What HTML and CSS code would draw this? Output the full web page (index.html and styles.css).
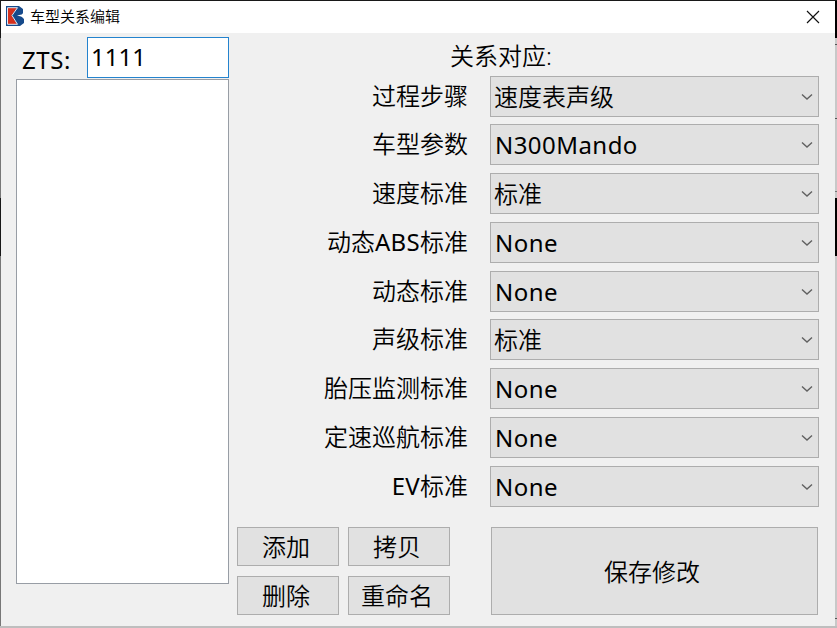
FILE: index.html
```html
<!DOCTYPE html>
<html lang="zh-CN">
<head>
<meta charset="utf-8">
<title>车型关系编辑</title>
<link rel="stylesheet" href="styles.css">
</head>
<body>
<div class="desktop">
<div class="edge"></div>
<main class="window">
  <header class="titlebar">
    <svg class="logo" width="18" height="20" viewBox="0 0 18 20"><path fill="#164a8b" d="M0 0H13L17 3V7L15 10L18 13V17L14 20H0Z"/><path fill="#d5301d" d="M1.7 2H11L5.5 9.5L11 18H1.7Z"/><path fill="none" stroke="#e4e9f2" stroke-width="1" d="M1.5 1.7H11.5L6 9.5L11.5 18.3H1.5Z"/><path fill="#fff" d="M11 9.5L18 8V11L15 10.5Z"/></svg>
    <h1 class="title">车型关系编辑</h1>
    <svg class="close" width="14" height="14" viewBox="0 0 14 14"><path d="M1 1L13 13M13 1L1 13" fill="none" stroke="#111" stroke-width="1.15"/></svg>
  </header>
  <div class="content">
    <section class="left">
      <div class="search"><span>ZTS:</span><div class="input">1111</div></div>
      <div class="list"></div>
    </section>
    <section class="right">
      <h2 class="heading">关系对应:</h2>
      <div class="fields">
        <span class="label">过程步骤</span><div class="combo"><span>速度表声级</span><svg class="arrow" viewBox="0 0 12 8"><path d="M1 1.5L6 6L11 1.5"/></svg></div>
        <span class="label">车型参数</span><div class="combo latin"><span>N300Mando</span><svg class="arrow" viewBox="0 0 12 8"><path d="M1 1.5L6 6L11 1.5"/></svg></div>
        <span class="label">速度标准</span><div class="combo"><span>标准</span><svg class="arrow" viewBox="0 0 12 8"><path d="M1 1.5L6 6L11 1.5"/></svg></div>
        <span class="label">动态<b>ABS</b>标准</span><div class="combo latin"><span>None</span><svg class="arrow" viewBox="0 0 12 8"><path d="M1 1.5L6 6L11 1.5"/></svg></div>
        <span class="label">动态标准</span><div class="combo latin"><span>None</span><svg class="arrow" viewBox="0 0 12 8"><path d="M1 1.5L6 6L11 1.5"/></svg></div>
        <span class="label">声级标准</span><div class="combo"><span>标准</span><svg class="arrow" viewBox="0 0 12 8"><path d="M1 1.5L6 6L11 1.5"/></svg></div>
        <span class="label">胎压监测标准</span><div class="combo latin"><span>None</span><svg class="arrow" viewBox="0 0 12 8"><path d="M1 1.5L6 6L11 1.5"/></svg></div>
        <span class="label">定速巡航标准</span><div class="combo latin"><span>None</span><svg class="arrow" viewBox="0 0 12 8"><path d="M1 1.5L6 6L11 1.5"/></svg></div>
        <span class="label"><b>EV</b>标准</span><div class="combo latin"><span>None</span><svg class="arrow" viewBox="0 0 12 8"><path d="M1 1.5L6 6L11 1.5"/></svg></div>
      </div>
      <div class="actions">
        <button>添加</button><button>拷贝</button><button class="save">保存修改</button>
        <button>删除</button><button>重命名</button>
      </div>
    </section>
  </div>
</main>
<div class="edge edge-right"></div>
</div>
</body>
</html>
```
FILE: styles.css
```css
* { box-sizing: border-box; }
body { margin: 0; font-family: "Noto Sans", "Noto Sans CJK SC", sans-serif; font-size: 24px; line-height: 36px; color: #000; overflow: hidden; }
.desktop { display: grid; grid-template-columns: 1px 834px 2px; width: 837px; height: 628px; padding-top: 1px; border-bottom: 2px solid #bebebe; background: #181818; }
.edge { background: linear-gradient(#181818 0 37px, #777 37px 197px, #181818 197px 255px, #777 255px); }
.edge-right { background: linear-gradient(#000 0 37px, #c8c8c8 37px 43px, #555 43px 44px, #c8c8c8 44px 117px, #555 117px 118px, #c8c8c8 118px 190px, #777 190px 191px, #c8c8c8 191px 197px, #000 197px 255px, #c8c8c8 255px 617px, #555 617px 618px, #c8c8c8 618px); }
.window { background: #f0f0f0; }
.titlebar { height: 32px; display: flex; align-items: center; padding: 0 15px 0 5px; background: #fff; }
.logo { margin-top: -2px; }
.title { margin: -3px auto 0 6px; font: 350 15px/24px "Noto Sans CJK SC DemiLight", "Noto Sans CJK SC", sans-serif; }
.content { display: flex; }
.left { width: 227.5px; padding: 4px 0 0 15px; }
.search { display: flex; justify-content: space-between; }
.search span { margin: 5px 0 0 6px; letter-spacing: .6px; }
.input { width: 141.5px; height: 41px; padding: 1px 3px; border: 1px solid #2483ce; background: #fff; }
.list { width: 212.5px; height: 505px; margin-top: 1px; border: 1px solid #989da5; background: #fff; }
.right { width: 590px; padding: 4px 0 0 8.5px; }
.heading { margin: 0 0 0 213px; height: 38.5px; font-weight: 350; font-size: 24px; line-height: 37px; }
.fields { display: grid; grid-template-columns: 231px 329px; grid-auto-rows: 41px; row-gap: 7.8px; column-gap: 22px; }
.label { text-align: right; line-height: 39px; white-space: nowrap; font-weight: 350; }
.label b { font-weight: 400; letter-spacing: .3px; }
.combo { display: flex; justify-content: space-between; align-items: center; padding: 1px 5px 0 3px; border: 1px solid #adadad; background: #e1e1e1; font-weight: 350; }
.latin { padding-left: 4px; font-weight: 400; letter-spacing: .45px; }
.arrow { width: 12px; height: 8px; fill: none; stroke: #606060; stroke-width: 1.4; }
.actions { display: grid; grid-template-columns: 102px 102px 359px; grid-template-rows: 39px 39px; gap: 10px 9px; margin-top: 20.5px; }
.save { grid-column: 3; grid-row: 1 / 3; margin-left: 31.5px; width: 327px; }
button { padding: 0 4px 2px 0; border: 1px solid #adadad; background: #e1e1e1; color: #000; font: 350 24px/35px "Noto Sans CJK SC DemiLight", "Noto Sans CJK SC", sans-serif; }
```
